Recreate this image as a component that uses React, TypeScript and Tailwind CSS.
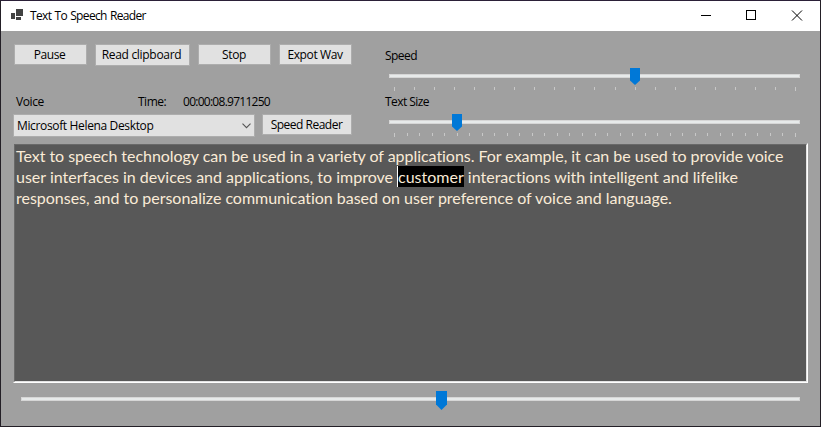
import React from "react";

type ButtonProps = { label: string; size: string; text: string };

function PushButton({ label, size, text }: ButtonProps) {
  return (
    <button
      className={`flex shrink-0 items-center justify-center whitespace-nowrap border border-[#adadad] bg-[#e1e1e1] ${size} ${text}`}
    >
      {label}
    </button>
  );
}

function Thumb({ className, tall }: { className: string; tall?: boolean }) {
  return tall ? (
    <svg className={`absolute ${className}`} width="11" height="19" viewBox="0 0 11 19">
      <path d="M0 0H11V13.5L5.5 19L0 13.5Z" fill="#0078d7" />
    </svg>
  ) : (
    <svg className={`absolute ${className}`} width="10" height="17" viewBox="0 0 10 17">
      <path d="M0 0H10V12.5L5 17L0 12.5Z" fill="#0078d7" />
    </svg>
  );
}

function Rail({ children }: { children: React.ReactNode }) {
  return <div className="relative h-1 border border-[#d6d6d6] bg-[#e7eaea]">{children}</div>;
}

function Ticks({ count }: { count: number }) {
  return (
    <div className="ml-[5px] mt-[9px] flex h-1 w-[402px] items-start justify-between">
      {Array.from({ length: count }, (_, i) => (
        <span
          key={i}
          className={`w-px bg-[#c8c8c8] ${i === 0 || i === count - 1 ? "h-1" : "h-[3px]"}`}
        />
      ))}
    </div>
  );
}

export default function App() {
  return (
    <div className="flex h-[427px] w-[821px] flex-col overflow-hidden border border-[#231f26] border-t-[#2b2038] bg-[#a0a0a0] font-['Open_Sans','Noto_Sans',sans-serif] text-[12px] leading-4 text-black">
      <header className="flex h-[30px] shrink-0 items-center bg-white pl-[10px]">
        <svg width="12" height="11" viewBox="0 0 12 11" fill="#424242" className="-mt-[3px]" shapeRendering="crispEdges">
          <rect x="0" y="4" width="4" height="6" />
          <rect x="5" y="0" width="7" height="7" />
          <rect x="5" y="8" width="5" height="3" />
        </svg>
        <h1 className="ml-[7px] whitespace-nowrap tracking-[-0.65px] [word-spacing:0.7px]">Text To Speech Reader</h1>
        <svg className="ml-auto mr-[17px] -mt-px" width="102" height="11" viewBox="0 0 102 11" fill="none" stroke="#000">
          <path d="M0 5.5H10" />
          <rect x="45.5" y="0.5" width="9" height="9" />
          <path d="M91 0.5L101 10.5M101 0.5L91 10.5" />
        </svg>
      </header>

      <div className="flex h-[112px] shrink-0">
        <section className="flex w-[384px] flex-col pl-3 pt-[13px]">
          <div className="ml-px flex h-[22px] items-start gap-2">
            <PushButton label="Pause" size="h-[21px] w-[73px]" text="pr-[2px] tracking-[-0.4px]" />
            <PushButton label="Read clipboard" size="h-[22px] w-[95px]" text="pr-[2px] tracking-[-0.3px]" />
            <PushButton label="Stop" size="h-[21px] w-[73px]" text="pr-px tracking-[-0.3px]" />
            <PushButton label="Expot Wav" size="h-[21px] w-[73px]" text="pr-px tracking-[-0.4px]" />
          </div>
          <div className="mt-[28px] flex h-4 pl-[3px]">
            <span className="w-[122px] tracking-[-0.4px]">Voice</span>
            <span className="w-[45px] tracking-[-0.5px]">Time:</span>
            <span className="tracking-[-0.73px]">00:00:08.9711250</span>
          </div>
          <div className="mt-1 flex items-start gap-[7px]">
            <div className="flex h-[23px] w-[242px] items-center border border-[#adadad] bg-[#e1e1e1] pl-[3px]">
              <span className="whitespace-nowrap tracking-[-0.35px]">Microsoft Helena Desktop</span>
              <svg className="ml-auto mr-[3px]" width="9" height="6" viewBox="0 0 9 6" fill="none" stroke="#555" strokeWidth="1.1">
                <path d="M0.5 0.7L4.5 4.7L8.5 0.7" />
              </svg>
            </div>
            <PushButton label="Speed Reader" size="h-[21px] w-[90px]" text="pr-px tracking-[-0.5px]" />
          </div>
        </section>

        <section className="w-[415px] pt-[17px]">
          <div className="h-4 tracking-[-0.55px]">Speed</div>
          <div className="ml-1 mt-[10px]">
            <Rail>
              <Thumb className="left-[240px] top-[-7px]" />
            </Rail>
          </div>
          <div className="ml-1"><Ticks count={21} /></div>
          <div className="mt-[3px] h-4 tracking-[-0.55px]">Text Size</div>
          <div className="ml-1 mt-[10px]">
            <Rail>
              <Thumb className="left-[62px] top-[-7px]" />
            </Rail>
          </div>
          <div className="ml-1"><Ticks count={33} /></div>
        </section>
      </div>

      <main className="ml-3 h-[240px] w-[795px] shrink-0 border border-[#a0a0a0] border-b-white border-r-white">
        <div className="h-full border border-[#696969] border-b-[#e3e3e3] border-r-[#e3e3e3] bg-[#585858] pl-px font-['Lato',sans-serif] text-[16px] leading-[21px] text-[#faebd7] [font-variant-ligatures:none]">
          <p className="whitespace-pre tracking-[-0.04px]">Text to speech technology can be used in a variety of applications. For example, it can be used to provide voice</p>
          <p className="whitespace-pre">user interfaces in devices and applications, to improve <mark className="inline-block h-[21px] border-l border-white bg-black align-top text-[#faebd7]">customer</mark> interactions with intelligent and lifelike</p>
          <p className="whitespace-pre tracking-[-0.02px]">responses, and to personalize communication based on user preference of voice and language.</p>
        </div>
      </main>

      <footer className="ml-5 mt-[14px] w-[779px]">
        <Rail>
          <Thumb tall className="left-[414px] top-[-7px]" />
        </Rail>
      </footer>
    </div>
  );
}
